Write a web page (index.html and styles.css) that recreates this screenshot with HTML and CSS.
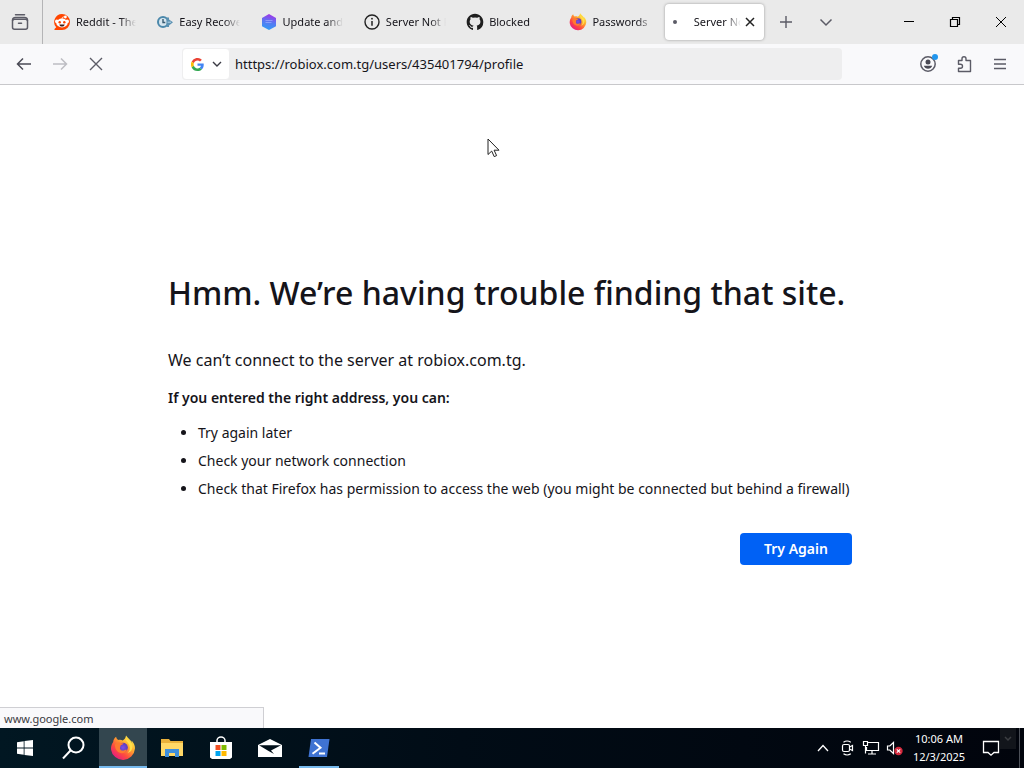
FILE: index.html
```html
<!DOCTYPE html>
<html lang="en">
<head>
  <meta charset="UTF-8">
  <meta name="viewport" content="width=device-width, initial-scale=1.0">
  <title>Server Not Found</title>
  <link rel="stylesheet" href="styles.css">
</head>
<body>
  <!-- tab strip -->
  <header class="tabbar">
    <button class="view-btn" aria-label="Firefox View">
      <svg width="18" height="18" viewBox="0 0 18 18" fill="none" stroke="#5b5b66" stroke-width="1.5" stroke-linecap="round"><path d="M4.500 1.700h9"/><path d="M1.500 7.500c0-2 1-3 3-3h9c2 0 3 1 3 3"/><rect x="1.500" y="6.300" width="15" height="10" rx="2"/><path d="M7.500 10.200h3"/></svg>
    </button>
    <nav class="tabs">
      <button class="tab">
        <svg width="18" height="18" viewBox="0 0 18 18"><path d="M9 1a8 8 0 1 1 0 16H2.200c-.8 0-1-.7-.5-1.200l1.500-1.500A8 8 0 0 1 9 1z" fill="#ff4500"/><circle cx="3.800" cy="8.400" r="1.800" fill="#fff"/><circle cx="14.200" cy="8.400" r="1.800" fill="#fff"/><ellipse cx="9" cy="10" rx="5.700" ry="4.400" fill="#fff"/><circle cx="12.400" cy="4" r="1.400" fill="#fff"/><path d="M9 6c0-1.800.8-2.300 2.600-2" fill="none" stroke="#fff" stroke-width=".8"/><circle cx="6.700" cy="9.300" r="1.200" fill="#ff4500"/><circle cx="11.300" cy="9.300" r="1.200" fill="#ff4500"/><path d="M6.300 11.500h5.400c-.5 1.700-1.500 2.100-2.700 2.100s-2.200-.4-2.700-2.100z" fill="#41201a"/></svg>
        <span class="tab-label">Reddit - The heart</span>
      </button>
      <button class="tab">
        <svg width="18" height="18" viewBox="0 0 18 18"><circle cx="7" cy="9" r="5" fill="#d7e6ef" stroke="#4b88ab" stroke-width="2"/><path d="M7 6v3.500h2.300" stroke="#385b72" stroke-width="1.400" fill="none"/><path d="M10.500 4.500H13v2l4 2.700-4 3.300v1.500h-2.500z" fill="#5b91b2"/><path d="M11.500 9.200h3.500" stroke="#b9d6e7"/></svg>
        <span class="tab-label">Easy Recovery</span>
      </button>
      <button class="tab">
        <svg width="18" height="18" viewBox="0 0 18 18"><defs><linearGradient id="hex" x1=".6" y1="0" x2=".4" y2="1"><stop offset="0" stop-color="#a432e8"/><stop offset=".5" stop-color="#5878f2"/><stop offset="1" stop-color="#2f9cf5"/></linearGradient></defs><path d="M9 1l7 4v8.200l-7 3.900-7-3.900V5z" fill="url(#hex)"/><path d="M5.500 7.500h7M5.500 9.500h6" stroke="#a8b8ff" stroke-width="1.200" opacity=".6"/></svg>
        <span class="tab-label">Update and restore</span>
      </button>
      <button class="tab">
        <svg width="18" height="18" viewBox="0 0 18 18" fill="none" stroke="#222" stroke-width="1.400"><circle cx="9" cy="9" r="7"/><path d="M9 8v4.800" stroke-width="1.500"/><circle cx="9" cy="5.700" r=".9" fill="#222" stroke="none"/></svg>
        <span class="tab-label">Server Not Found</span>
      </button>
      <button class="tab">
        <svg width="18" height="18" viewBox="0 0 16 16"><path fill="#1f1f1f" d="M8 .6C3.800.6.600 3.900.600 8c0 3.300 2.100 6 5.100 7 .400.100.500-.200.500-.400v-1.400c-2 .4-2.500-.9-2.500-.9-.3-.9-.8-1.100-.8-1.100-.7-.5 0-.5 0-.5.7.1 1.100.8 1.100.8.700 1.100 1.700.8 2.200.6.100-.5.300-.8.500-1-1.600-.2-3.400-.8-3.400-3.600 0-.8.300-1.500.8-2-.1-.2-.4-.9.1-2 0 0 .6-.2 2 .7a7 7 0 0 1 3.700 0c1.400-.9 2-.7 2-.7.4 1.100.2 1.800.1 2 .5.500.8 1.200.8 2 0 2.800-1.800 3.400-3.400 3.600.3.200.5.700.5 1.400v2.100c0 .200.100.500.500.400a7.400 7.400 0 0 0 5-7C15.400 3.900 12.100.600 8 .600z"/></svg>
        <span class="tab-label">Blocked</span>
      </button>
      <button class="tab">
        <svg width="18" height="18" viewBox="0 0 32 32"><use href="#firefox"/></svg>
        <span class="tab-label">Passwords</span>
      </button>
      <div class="tab active">
        <span class="throbber"></span>
        <span class="tab-label">Server Not Found</span>
        <button class="tab-close" aria-label="Close tab">
          <svg width="10" height="10" viewBox="0 0 10 10" stroke="#222" stroke-width="1.500"><path d="M1 1l8 8M9 1L1 9"/></svg>
        </button>
      </div>
    </nav>
    <button class="tool" aria-label="New tab"><svg width="14" height="14" viewBox="0 0 14 14" stroke="#5b5b66" stroke-width="1.400"><path d="M7 1v12M1 7h12"/></svg></button>
    <button class="tool" aria-label="List all tabs"><svg width="14" height="14" viewBox="0 0 14 14" fill="none" stroke="#5b5b66" stroke-width="1.500"><path d="M1.500 4.500L7 10l5.500-5.500"/></svg></button>
    <div class="window-controls">
      <button aria-label="Minimize"><svg width="12" height="12" viewBox="0 0 12 12" stroke="#000"><path d="M1 5.500h10"/></svg></button>
      <button aria-label="Restore"><svg width="12" height="12" viewBox="0 0 12 12" fill="none" stroke="#000" stroke-width="1.200"><path d="M1.500 3.500h7v7h-7zM3.500 3.500v-2h7v7h-2"/></svg></button>
      <button aria-label="Close"><svg width="12" height="12" viewBox="0 0 12 12" stroke="#000"><path d="M1 1l10 10M11 1L1 11"/></svg></button>
    </div>
  </header>

  <!-- navigation toolbar -->
  <div class="navbar">
    <div class="nav-buttons">
      <button aria-label="Back"><svg width="16" height="16" viewBox="0 0 16 16" fill="none" stroke="#4a4a55" stroke-width="1.500"><path d="M15 8H1.500M7 2.500L1.500 8 7 13.500"/></svg></button>
      <button aria-label="Forward" disabled><svg width="16" height="16" viewBox="0 0 16 16" fill="none" stroke="#bdbdc3" stroke-width="1.500"><path d="M1 8h13.500M9 2.500L14.500 8 9 13.500"/></svg></button>
      <button aria-label="Stop"><svg width="16" height="16" viewBox="0 0 16 16" stroke="#5b5b66" stroke-width="1.400"><path d="M2 2l12 12M14 2L2 14"/></svg></button>
    </div>
    <div class="urlbar">
      <button class="engine" aria-label="Search with Google">
        <svg width="13" height="13" viewBox="0 0 48 48"><path fill="#ea4335" d="M24 9.500c3.500 0 6.700 1.200 9.200 3.600l6.900-6.900A24 24 0 0 0 2.600 13.200l8 6.200C12.500 13.700 17.700 9.500 24 9.500z"/><path fill="#4285f4" d="M47 24.500c0-1.600-.2-3.100-.4-4.500H24v9h12.900a11 11 0 0 1-4.700 7.200l7.700 6c4.500-4.200 7.100-10.400 7.100-17.700z"/><path fill="#fbbc05" d="M10.500 28.600a14.500 14.500 0 0 1 0-9.200l-8-6.200a24 24 0 0 0 0 21.600z"/><path fill="#34a853" d="M24 48c6.500 0 11.900-2.100 15.900-5.800l-7.700-6a14.400 14.400 0 0 1-21.700-7.600l-8 6.200A24 24 0 0 0 24 48z"/></svg>
        <svg width="10" height="10" viewBox="0 0 10 10" fill="none" stroke="#3a3a44" stroke-width="1.400"><path d="M1 3l4 4 4-4"/></svg>
      </button>
      <input class="url" type="text" aria-label="Address" value="htttps://robiox.com.tg/users/435401794/profile">
    </div>
    <div class="nav-actions">
      <button aria-label="Account"><svg width="20" height="20" viewBox="0 0 20 20"><circle cx="10" cy="10" r="7.200" fill="none" stroke="#5b5b66" stroke-width="1.500"/><circle cx="10" cy="8" r="2.500" fill="#4a4a55"/><path d="M5.800 11.800h8.400c-.6 2-2.200 3-4.200 3s-3.600-1-4.200-3z" fill="#4a4a55"/><circle cx="17" cy="3" r="3" fill="#2196ee"/></svg></button>
      <button aria-label="Extensions"><svg width="16" height="18" viewBox="0 0 16 18" fill="none" stroke="#5b5b66" stroke-width="1.400" stroke-linejoin="round"><path d="M2.500 5.500H6V3.800a2 2 0 0 1 4 0v1.700h4.500v11h-12v-3.300h2a2 2 0 0 0 0-4h-2z"/></svg></button>
      <button aria-label="Menu"><svg width="14" height="14" viewBox="0 0 14 14" stroke="#5b5b66" stroke-width="1.300"><path d="M1 2.500h12M1 7h12M1 11.500h12"/></svg></button>
    </div>
  </div>

  <main class="page">
    <div class="error">
      <h1>Hmm. We’re having trouble finding that site.</h1>
      <p class="desc">We can’t connect to the server at robiox.com.tg.</p>
      <p class="hint">If you entered the right address, you can:</p>
      <ul>
        <li>Try again later</li>
        <li>Check your network connection</li>
        <li>Check that Firefox has permission to access the web (you might be connected but behind a firewall)</li>
      </ul>
      <button class="retry">Try Again</button>
    </div>
    <div class="status">www.google.com</div>
    <svg class="cursor" width="14" height="20" viewBox="0 0 14 20"><path d="M1 1v15.500l3.700-3.400 2.500 5.500 2.400-1-2.500-5.400H12z" fill="#fff" stroke="#222"/></svg>
  </main>

  <!-- Windows taskbar -->
  <footer class="taskbar">
    <div class="apps">
      <button aria-label="Start"><svg width="16" height="16" viewBox="0 0 16 16" fill="#fff"><path d="M0 2.200l6.700-1v6.400H0zM7.500 1.100L16 0v7.600H7.500zM0 8.400h6.700v6.400l-6.700-1zM7.500 8.400H16V16l-8.500-1.100z"/></svg></button>
      <button aria-label="Search"><svg width="24" height="24" viewBox="0 0 24 24" fill="none" stroke="#fff" stroke-width="2"><circle cx="14" cy="9" r="7.500"/><path d="M8.500 14.500L1 22.500"/></svg></button>
      <button class="current" aria-label="Firefox">
        <svg width="26" height="26" viewBox="0 0 32 32">
          <defs>
            <linearGradient id="flame" x1=".85" y1=".1" x2=".2" y2=".9"><stop offset="0" stop-color="#fff04a"/><stop offset=".35" stop-color="#ffa82e"/><stop offset=".7" stop-color="#ff4b3e"/><stop offset="1" stop-color="#e8207a"/></linearGradient>
            <radialGradient id="globe"><stop offset="0" stop-color="#7a4fe8"/><stop offset="1" stop-color="#5b3bb4"/></radialGradient>
          </defs>
          <g id="firefox">
            <path d="M29.500 11c-.7-1.700-2-3.400-3.200-4 .9 1.800 1.300 3.400 1.300 3.400-2-4.800-5.300-6.300-7.900-9.900-.3 3-1.700 4.400-4 6.300-1.700-1.100-4-1-5.200-.6-1.700-.6-2.800-2.200-3-4-2 1.300-3.500 4-3.600 6.300C1.500 11.600 1 15.500 1.300 18A14.800 14.800 0 0 0 30.700 17c.2-2.200-.3-4.200-1.200-6z" fill="url(#flame)"/>
            <circle cx="16" cy="15.500" r="6" fill="url(#globe)"/>
            <path d="M6 12c2-3 5-3.400 7.500-2.300 1.100.5 2.500.3 3.200.3-.3 1.500-2.500 2-3.400 2.500-.8.500-.5 2-.5 2-1.500 2 .2 5 3.400 4.700 2-.2 3-1.500 4.700-.8-1.500 3-4.700 4.800-8 3.900C8.500 21 6 17 6 12z" fill="#ff7a30"/>
            <path d="M19 4c1 4.500 5.500 6.500 5.500 12 0 3-1.500 5-3 6.500 5-1.500 7-6 5.800-11C25.800 8 21 6.500 19 4z" fill="#ffe04a"/>
          </g>
        </svg>
      </button>
      <button aria-label="File Explorer"><svg width="22" height="20" viewBox="0 0 22 20"><path d="M0 1h8l1.500 2H22v15H0z" fill="#e9b13b"/><path d="M0 5h22v13H0z" fill="#ffd867"/><path d="M4 11h14v8h-4v-4H8v4H4z" fill="#3f8fdc"/></svg></button>
      <button aria-label="Microsoft Store"><svg width="24" height="24" viewBox="0 0 24 24"><path d="M8 7V4.500a4 3.500 0 0 1 8 0V7" fill="none" stroke="#fff" stroke-width="1.500"/><path d="M1 6h22v15.500l-2 1.500H3l-2-1.500z" fill="#fff"/><path d="M6.500 9h5v5h-5z" fill="#f25022"/><path d="M12.500 9h5v5h-5z" fill="#7fba00"/><path d="M6.500 15h5v5h-5z" fill="#00a4ef"/><path d="M12.500 15h5v5h-5z" fill="#ffb900"/></svg></button>
      <button aria-label="Mail"><svg width="24" height="20" viewBox="0 0 24 20"><path d="M0 7l12-6 12 6v12H0z" fill="#fff"/><path d="M1 7.200h22L13 12.600l3 3.400-5-2.700z" fill="#02101a"/></svg></button>
      <button class="running" aria-label="PowerShell"><svg width="24" height="20" viewBox="0 0 24 20"><path d="M4 1h18.500L20 19H1.500z" fill="#3f73d2"/><path d="M7.500 4.500l6 5.300-8 6" fill="none" stroke="#fff" stroke-width="2"/><path d="M12 15.500h6" stroke="#fff" stroke-width="2"/></svg></button>
    </div>
    <div class="tray">
      <button aria-label="Show hidden icons"><svg width="12" height="8" viewBox="0 0 12 8" fill="none" stroke="#fff" stroke-width="1.300"><path d="M1 7l5-5.500L11 7"/></svg></button>
      <button aria-label="Meet Now"><svg width="14" height="16" viewBox="0 0 14 16" fill="none" stroke="#fff" stroke-width="1.200"><rect x="2.500" y="4.500" width="7" height="7" rx="1.500"/><path d="M9.500 7l3-1.500v5l-3-1.500M3.500 2.200c2.300-1.500 5-1.500 7.300 0M3.500 13.800c2.300 1.500 5 1.500 7.300 0"/></svg></button>
      <button aria-label="Network"><svg width="18" height="16" viewBox="0 0 18 16" fill="none" stroke="#fff" stroke-width="1.200"><path d="M6 2.500h10.500v8H4.500V7M10 10.500v3M6 14h8M1.500 1.500h4v4h-4zM3.500 5.500v8"/></svg></button>
      <button aria-label="Volume muted"><svg width="18" height="16" viewBox="0 0 18 16"><path d="M1.500 6h2.300l3.700-3.500v11L3.800 10H1.500z" fill="none" stroke="#fff" stroke-width="1.200"/><circle cx="12.500" cy="11" r="4.200" fill="#d3293d"/><path d="M10.800 9.300l3.400 3.400M14.200 9.300l-3.400 3.400" stroke="#fff" stroke-width="1.100"/></svg></button>
      <button class="clock"><span>10:06 AM</span><span>12/3/2025</span></button>
      <button class="notify" aria-label="Notifications"><svg width="18" height="18" viewBox="0 0 18 18" fill="none" stroke="#fff" stroke-width="1.300"><path d="M1.500 2.500h15v11H12l-3 2.700-3-2.700H1.500z"/></svg></button>
      <span class="corner"><svg width="8" height="6" viewBox="0 0 8 6" fill="none" stroke="#3c3e42" stroke-width="1.500"><path d="M1 1l3 3 3-3"/></svg></span>
      <span class="show-desktop"></span>
    </div>
  </footer>
</body>
</html>
```
FILE: styles.css
```css
* {
  box-sizing: border-box;
}
body {
  margin: 0;
  height: 100vh;
  display: flex;
  flex-direction: column;
  overflow: hidden;
  font-family: "Noto Sans", "Open Sans", sans-serif;
  font-size: 11px;
  color: #15141a;
  background: #fff;
}
button {
  display: flex;
  align-items: center;
  justify-content: center;
  padding: 0;
  border: 0;
  background: none;
  font: inherit;
  color: inherit;
}
svg {
  flex: none;
}

/* tabs */
.tabbar {
  display: flex;
  flex: none;
  height: 44px;
  background: #eaeaea;
}
.view-btn {
  width: 43px;
  padding-right: 2px;
  border-right: 1px solid #b4b4b6;
}
.tabs {
  display: flex;
  flex: 0 1 723px;
  min-width: 0;
  padding: 4px 0;
}
.tab {
  flex: 1 1 0;
  min-width: 0;
  display: flex;
  align-items: center;
  justify-content: flex-start;
  gap: 5px;
  margin: 0 2px;
  padding: 0 8px;
  border-radius: 4px;
}
.tab.active {
  background: #fff;
  box-shadow: 0 0 3px rgba(0, 0, 0, 0.35);
}
.tab-label {
  flex: 1;
  overflow: hidden;
  white-space: nowrap;
  text-align: left;
  line-height: 20px;
  mask-image: linear-gradient(to left, transparent, #000 16px);
}
.throbber {
  flex: none;
  width: 4px;
  height: 4px;
  margin-right: 12px;
  border-radius: 50%;
  background: #5b5b66;
}
.tab-close {
  width: 12px;
  height: 20px;
}
.tab.active .tab-label {
  margin-right: -2px;
}
.tool {
  width: 40px;
}
.window-controls {
  display: flex;
  margin-left: auto;
}
.window-controls button {
  width: 46px;
}

/* toolbar */
.navbar {
  display: flex;
  flex: none;
  align-items: center;
  height: 41px;
  padding: 0 6px;
  background: #f9f9fb;
  border-bottom: 1px solid #c8c8cb;
}
.nav-buttons,
.nav-actions {
  display: flex;
}
.nav-buttons {
  flex: 0 0 176px;
}
.nav-buttons button,
.nav-actions button {
  width: 36px;
  height: 32px;
}
.urlbar {
  display: flex;
  flex: 0 1 660px;
  height: 32px;
  background: #eeeeef;
  border-radius: 4px;
}
.engine {
  flex: none;
  gap: 8px;
  width: 48px;
  border: 1px solid #eeeeef;
  border-radius: 4px;
  background: #fff;
}
.url {
  flex: 1;
  min-width: 0;
  padding: 0 5px;
  border: 0;
  outline: 0;
  background: none;
  font: inherit;
  font-size: 13px;
  color: #15141a;
}
.nav-actions {
  margin-left: auto;
}

/* error page */
.page {
  position: relative;
  display: flex;
  flex: 1;
  align-items: center;
  justify-content: center;
  padding-top: 20px;
}
.error {
  width: 688px;
  font-size: 14px;
}
h1 {
  margin: 0 0 31px;
  font-size: 32px;
  font-weight: 500;
  line-height: 48px;
}
.desc,
.hint {
  margin: 0;
  line-height: 24px;
}
.desc {
  margin-bottom: 14px;
  font-size: 16px;
}
.hint {
  margin-bottom: 9px;
  font-weight: 600;
}
ul {
  margin: 0 0 30px;
  padding-left: 30px;
}
li {
  line-height: 28px;
}
.retry {
  width: 112px;
  height: 32px;
  margin: 0 4px 0 auto;
  border-radius: 4px;
  background: #0061f5;
  color: #fff;
  font-weight: 600;
}
.status {
  position: absolute;
  left: 0;
  bottom: 0;
  width: 264px;
  height: 21px;
  padding-left: 4px;
  border: 1px solid #cfcfd3;
  border-width: 1px 1px 0 0;
  background: #f9f9fb;
  color: #3a3a42;
  line-height: 22px;
}
.cursor {
  position: absolute;
  left: 487px;
  top: 53px;
}

/* taskbar */
.taskbar {
  display: flex;
  flex: none;
  justify-content: space-between;
  height: 40px;
  background: linear-gradient(to right, #011722, #010c16 45%, #01040c);
  color: #fff;
}
.apps,
.tray {
  display: flex;
}
.apps {
  gap: 1px;
  padding-left: 1px;
}
.apps button {
  width: 48px;
}
.apps .current {
  background: #33464f;
  box-shadow: inset 0 -2px #76b9ed;
}
.apps .running {
  background: linear-gradient(#76b9ed, #76b9ed) center bottom / 40px 2px no-repeat;
}
.tray button {
  width: 24px;
}
.tray .clock {
  flex-direction: column;
  width: 64px;
  line-height: 18px;
}
.tray .notify {
  width: 40px;
}
.tray {
  position: relative;
}
.corner {
  position: absolute;
  top: 0;
  right: 8px;
  display: flex;
  align-items: center;
  justify-content: center;
  width: 16px;
  height: 21px;
  background: rgba(70, 70, 70, 0.25);
}
.show-desktop {
  width: 5px;
  margin-left: 8px;
  border-left: 1px solid #4c5058;
}
```
